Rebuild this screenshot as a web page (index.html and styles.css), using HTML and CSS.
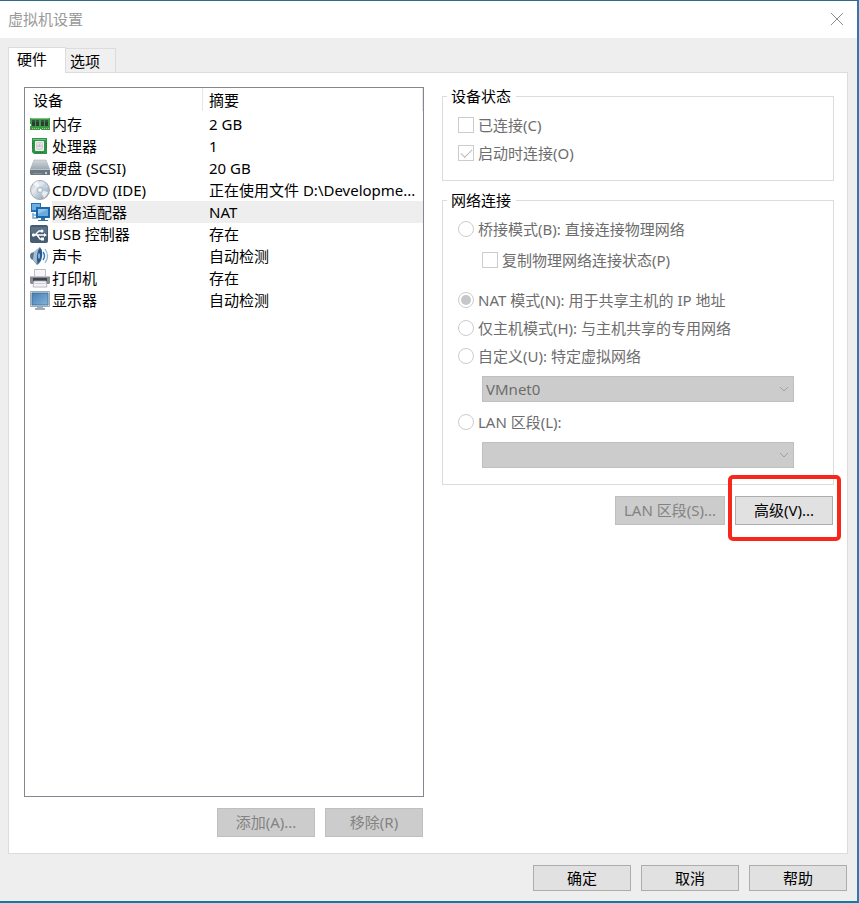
FILE: index.html
```
<!DOCTYPE html>
<html lang="zh-CN">
<head>
<meta charset="UTF-8" />
<meta name="viewport" content="width=device-width, initial-scale=1.0" />
<title>虚拟机设置</title>
<link rel="stylesheet" href="styles.css">
</head>
<body>

<div class="window">
  <header class="titlebar">
    <h1>虚拟机设置</h1>
    <button class="close" type="button" aria-label="关闭">
      <svg width="14" height="14" viewBox="0 0 14 14"><path d="M1 1L13 13M13 1L1 13" stroke="#8c8c8c" fill="none"/></svg>
    </button>
  </header>

  <div class="tabs" role="tablist">
    <button class="tab active" type="button" role="tab" aria-selected="true">硬件</button>
    <button class="tab" type="button" role="tab" aria-selected="false">选项</button>
  </div>

  <main class="panel">
    <section class="devices">
      <div class="device-list">
        <table>
          <colgroup>
            <col class="col-icon">
            <col class="col-name">
            <col>
          </colgroup>
          <thead>
            <tr><th colspan="2">设备</th><th class="summary">摘要</th></tr>
          </thead>
          <tbody>
            <tr>
              <td class="icon"><svg viewBox="0 0 20 20">
                <path d="M0 4h20v12h-9v-1h-1v1H0v-4h1v-2H0z" fill="#3c9a45"/>
                <path d="M1 4h18v1H1z" fill="#79c478"/>
                <path d="M2 6h3v6H2zM6 6h3v6H6zM11 6h3v6h-3zM15 6h3v6h-3z" fill="#2b3d30"/>
                <path d="M2 7h3M6 7h3M11 7h3M15 7h3" stroke="#506353"/>
                <path d="M2 14.500h7M12 14.500h7" stroke="#a9cb86" stroke-dasharray="1 1"/>
              </svg></td>
              <td class="name">内存</td><td class="summary">2 GB</td>
            </tr>
            <tr>
              <td class="icon"><svg viewBox="0 0 20 20">
                <path d="M2 2h15v16H4l-2-2z" fill="#2f9448"/>
                <path d="M3 3h13v1H3z" fill="#70c181"/>
                <rect x="5" y="5" width="9" height="10" rx="1" fill="#f0f2f0"/>
                <rect x="6.500" y="6.500" width="6" height="7" rx="1" fill="#e3e1e4" stroke="#d0d2d2"/>
                <path d="M8 9v2M9.500 8v3M11 9v2" stroke="#d0bccb"/>
                <path d="M2.500 7v6M16.500 7v6M6 16.500h8" stroke="#1d713a" stroke-dasharray="1 1"/>
              </svg></td>
              <td class="name">处理器</td><td class="summary">1</td>
            </tr>
            <tr>
              <td class="icon"><svg viewBox="0 0 20 20">
                <defs><linearGradient id="disk" x2="0" y2="1"><stop stop-color="#d3d9df"/><stop offset="1" stop-color="#98a4ad"/></linearGradient></defs>
                <path d="M4 2h12l4 10H0z" fill="url(#disk)" stroke="#9aa4ab" stroke-width=".5"/>
                <path d="M0 11h20v6H1l-1-1z" fill="#6b7780"/>
                <path d="M0 11.500h20" stroke="#b8c1c7"/>
                <path d="M3 15.500h9" stroke="#87929a"/>
                <path d="M15 14h2v2h-2z" fill="#bdd1d8"/>
              </svg></td>
              <td class="name">硬盘 (SCSI)</td><td class="summary">20 GB</td>
            </tr>
            <tr>
              <td class="icon"><svg viewBox="0 0 20 20">
                <defs><linearGradient id="disc" x2="1" y2="1"><stop stop-color="#b7bfc7"/><stop offset=".35" stop-color="#e8ebee"/><stop offset=".6" stop-color="#b9c8d7"/><stop offset="1" stop-color="#8e9aa7"/></linearGradient></defs>
                <circle cx="10" cy="10" r="9.500" fill="url(#disc)" stroke="#8f9aa4" stroke-width=".8"/>
                <path d="M10 10L3 4A9 9 0 0 1 8 1zM10 10L18 12A9 9 0 0 1 14 18z" fill="#f7f9fb" opacity=".8"/>
                <path d="M10 10L15 3A9 9 0 0 1 18 7z" fill="#bed5e7"/>
                <circle cx="10" cy="10" r="3" fill="#d2dae1" stroke="#a1adb8" stroke-width=".7"/>
                <circle cx="10" cy="10" r="1.300" fill="#fff"/>
              </svg></td>
              <td class="name">CD/DVD (IDE)</td><td class="summary">正在使用文件 D:\Developme...</td>
            </tr>
            <tr class="selected">
              <td class="icon"><svg viewBox="0 0 20 20">
                <path d="M1 1h10v9H1z" fill="#2472b5"/>
                <path d="M2 2h8v6H2z" fill="#6faee0"/>
                <path d="M3 11v5h5M3 13h3" stroke="#78a9cf" stroke-width="1.500" fill="none"/>
                <path d="M6 5h14v11H6z" fill="#1c67aa"/>
                <path d="M8 7h10v7H8z" fill="#68abdc"/>
                <path d="M8 7h10l-10 5z" fill="#91c6eb"/>
                <path d="M11 16h4v2h3v1H8v-1h3z" fill="#38709e"/>
              </svg></td>
              <td class="name">网络适配器</td><td class="summary">NAT</td>
            </tr>
            <tr>
              <td class="icon"><svg viewBox="0 0 20 20">
                <rect y="1" width="18" height="18" rx="2" fill="#465c72"/>
                <path d="M1 3h16v6H1z" fill="#5b7186"/>
                <path d="M3 11h11M5 11l4-4h3M7 11l3 4h2" stroke="#fff" stroke-width="1.300" fill="none"/>
                <circle cx="3.500" cy="11" r="1.700" fill="#fff"/>
                <circle cx="12" cy="7" r="1.500" fill="#fff"/>
                <path d="M11 13.500h3v3h-3zM14 9l3 2-3 2z" fill="#fff"/>
              </svg></td>
              <td class="name">USB 控制器</td><td class="summary">存在</td>
            </tr>
            <tr>
              <td class="icon"><svg viewBox="0 0 20 20">
                <path d="M1 7l3-1 6-5q3 4 2 10t-5 8l-4-5-2-1Q-1 10 1 7z" fill="#557796"/>
                <path d="M4 6l6-5q-4 5-3 17l-4-4z" fill="#a9bed0"/>
                <ellipse cx="9.500" cy="9.500" rx="2.300" ry="7" transform="rotate(8 9.500 9.500)" fill="#26578d"/>
                <ellipse cx="9" cy="10" rx="1" ry="3" fill="#89bbdf"/>
                <path d="M13 6q3 4 0 8" stroke="#3c7db9" stroke-width="1.500" fill="none"/>
                <path d="M15 3q5 7 0 14" stroke="#91b4cf" stroke-width="1.200" fill="none"/>
              </svg></td>
              <td class="name">声卡</td><td class="summary">自动检测</td>
            </tr>
            <tr>
              <td class="icon"><svg viewBox="0 0 20 20">
                <path d="M4.500 1.500h11v7h-11z" fill="#f6f6fa" stroke="#bbbcc5"/>
                <path d="M1 8h18l1 1v6l-1 1H1l-1-1V9z" fill="#898b96"/>
                <path d="M1 8.500h18" stroke="#c2c3ca"/>
                <path d="M3 10h14v3H3z" fill="#41434e"/>
                <path d="M4 13h12l1 6H3z" fill="#f4f4f7" stroke="#a9abb5" stroke-width=".8"/>
                <path d="M5 15.500h10" stroke="#c9cad0"/>
              </svg></td>
              <td class="name">打印机</td><td class="summary">存在</td>
            </tr>
            <tr>
              <td class="icon"><svg viewBox="0 0 20 20">
                <defs><linearGradient id="screen" x2="1" y2="1"><stop stop-color="#477fb3"/><stop offset="1" stop-color="#86b3d8"/></linearGradient></defs>
                <path d="M.5 1.500h19v15H.500z" fill="#dce4ea" stroke="#9aabb8"/>
                <path d="M2 3h16v12H2z" fill="url(#screen)" stroke="#376b9c" stroke-width=".8"/>
                <path d="M7 17h6v1h2v2H5v-2h2z" fill="#a0adb6"/>
              </svg></td>
              <td class="name">显示器</td><td class="summary">自动检测</td>
            </tr>
          </tbody>
        </table>
      </div>
      <div class="actions">
        <button class="btn" type="button" disabled>添加(A)...</button>
        <button class="btn" type="button" disabled>移除(R)</button>
      </div>
    </section>

    <section class="settings">
      <fieldset class="status">
        <legend>设备状态</legend>
        <label class="option"><input type="checkbox" disabled>已连接(C)</label>
        <label class="option"><input type="checkbox" checked disabled>启动时连接(O)</label>
      </fieldset>

      <fieldset class="network">
        <legend>网络连接</legend>
        <label class="option"><input type="radio" name="net" disabled>桥接模式(B): 直接连接物理网络</label>
        <label class="option nested"><input type="checkbox" disabled>复制物理网络连接状态(P)</label>
        <label class="option"><input type="radio" name="net" checked disabled>NAT 模式(N): 用于共享主机的 IP 地址</label>
        <label class="option"><input type="radio" name="net" disabled>仅主机模式(H): 与主机共享的专用网络</label>
        <label class="option"><input type="radio" name="net" disabled>自定义(U): 特定虚拟网络</label>
        <div class="dropdown">
          <select aria-label="特定虚拟网络" disabled><option>VMnet0</option></select>
          <svg class="arrow" width="10" height="6" viewBox="0 0 10 6"><path d="M1 1l4 4 4-4" stroke="#a0a0a0" fill="none"/></svg>
        </div>
        <label class="option"><input type="radio" name="net" disabled>LAN 区段(L):</label>
        <div class="dropdown">
          <select aria-label="LAN 区段" disabled><option></option></select>
          <svg class="arrow" width="10" height="6" viewBox="0 0 10 6"><path d="M1 1l4 4 4-4" stroke="#a0a0a0" fill="none"/></svg>
        </div>
      </fieldset>

      <div class="actions">
        <button class="btn wide" type="button" disabled>LAN 区段(S)...</button>
        <span class="highlight"><button class="btn" type="button">高级(V)...</button></span>
      </div>
    </section>
  </main>

  <footer class="footer">
    <button class="btn" type="button">确定</button>
    <button class="btn" type="button">取消</button>
    <button class="btn" type="button">帮助</button>
  </footer>
</div>

</body>
</html>
```

FILE: styles.css
```
* {
  box-sizing: border-box;
}

body {
  margin: 0;
  font-family: "Noto Sans", "Noto Sans CJK SC", sans-serif;
  font-size: 15px;
  line-height: 20px;
  color: #000;
}

button, select, input {
  font: inherit;
  margin: 0;
}

.window {
  display: flex;
  flex-direction: column;
  min-height: 100vh;
  background: #eee;
  border-top: 1px solid #2f6a8c;
  border-right: 2px solid #2a7ab5;
  border-bottom: 2px solid #0a7ca6;
}

.titlebar {
  display: flex;
  align-items: center;
  justify-content: space-between;
  height: 37px;
  padding: 0 13px 2px 8px;
  background: #fff;
}

.titlebar h1 {
  margin: 0;
  font-size: 15px;
  font-weight: 400;
  color: #999;
}

.close {
  display: flex;
  padding: 0;
  border: none;
  background: none;
}

.tabs {
  display: flex;
  align-items: flex-end;
  padding: 9px 8px 0;
}

.tab {
  height: 24px;
  padding: 0 15px 0 4px;
  border: 1px solid #dcdcdc;
  border-bottom: none;
  border-left: none;
  background: #f0f0f0;
}

/* open tab covers the top edge of the panel */
.tab.active {
  height: 26px;
  margin-bottom: -1px;
  padding: 0 18px 4px 8px;
  border-left: 1px solid #dcdcdc;
  background: #fff;
  z-index: 1;
}

.panel {
  flex: 1;
  display: grid;
  grid-template-columns: 400fr 392fr;
  gap: 18px;
  margin: 0 9px 0 8px;
  padding: 14px 13px 16px 15px;
  border: 1px solid #dcdcdc;
  background: #fff;
}

.devices {
  display: flex;
  flex-direction: column;
  min-width: 0;
}

.device-list {
  flex: 1;
  border: 1px solid #828790;
  overflow: hidden;
}

table {
  width: 100%;
  table-layout: fixed;
  border-collapse: collapse;
}

.col-icon {
  width: 27px;
}

.col-name {
  width: 151px;
}

th {
  height: 25px;
  padding: 0 0 1px 8px;
  font-weight: 400;
  text-align: left;
  background: linear-gradient(#e5e5e5, #e5e5e5) right top / 1px 23px no-repeat;
}

td {
  height: 22px;
  padding: 0 0 1px;
  white-space: nowrap;
}

td.icon {
  padding: 0 0 0 5px;
}

td.icon svg {
  display: block;
  width: 20px;
  height: 20px;
}

.summary {
  padding-left: 6px;
}

.selected .name, .selected .summary {
  background: #eee;
}

.actions {
  display: flex;
  justify-content: flex-end;
  gap: 10px;
  padding: 11px 1px 0 0;
}

.btn {
  width: 98px;
  height: 29px;
  padding: 0 0 1px;
  border: 1px solid #adadad;
  background: #e1e1e1;
  color: #000;
}

.btn.wide {
  width: 110px;
}

.btn:disabled {
  border-color: #bfbfbf;
  background: #ccc;
  color: #838383;
}

.settings {
  min-width: 0;
}

fieldset {
  min-width: 0;
  margin: 0;
  padding: 6px 15px 13px;
  border: 1px solid #dcdcdc;
}

legend {
  padding: 0 5px 0 4px;
  margin-left: -11px;
  line-height: 18px;
}

.network {
  margin-top: 10px;
  padding-bottom: 16px;
}

.option {
  display: flex;
  align-items: center;
  gap: 4px;
  height: 28px;
  color: #6d6d6d;
}

.option.nested {
  margin: 3px 0 12px 24px;
}

.option input {
  appearance: none;
  display: grid;
  place-items: center;
  width: 16px;
  height: 16px;
  border: 1px solid #ccc;
  background: #fff;
}

.option input[type="radio"] {
  border-radius: 50%;
}

.option input[type="radio"]:checked::before {
  content: "";
  width: 10px;
  height: 10px;
  border-radius: 50%;
  background: #c4c8c8;
}

.option input[type="checkbox"]:checked::before {
  content: "";
  width: 10px;
  height: 5px;
  margin-bottom: 3px;
  border: solid #bcbcbc;
  border-width: 0 0 1px 1px;
  transform: rotate(-45deg);
}

.dropdown {
  position: relative;
  margin: 6px 24px;
}

.network .dropdown:last-child {
  margin-bottom: 0;
}

.dropdown select {
  appearance: none;
  display: block;
  width: 100%;
  height: 26px;
  padding: 0 24px 0 3px;
  border: 1px solid #bfbfbf;
  border-radius: 0;
  background: #ccc;
  color: #6d6d6d;
  opacity: 1;
}

.dropdown .arrow {
  position: absolute;
  right: 5px;
  top: 10px;
}

.highlight {
  position: relative;
}

/* red frame drawn around the advanced button */
.highlight::after {
  content: "";
  position: absolute;
  inset: -21px -8px -16px -7px;
  border: 4px solid #f9261c;
  border-radius: 5px;
  pointer-events: none;
}

.footer {
  display: flex;
  justify-content: flex-end;
  gap: 10px;
  padding: 11px 10px 10px;
}

.footer .btn {
  height: 26px;
}
```
